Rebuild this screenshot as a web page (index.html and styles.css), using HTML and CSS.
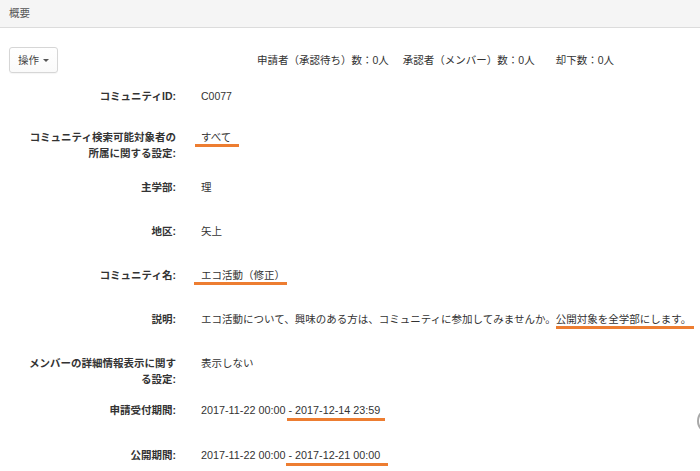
FILE: index.html
```html
<!DOCTYPE html>
<html lang="ja">
<head>
<meta charset="utf-8">
<title>概要</title>
<link rel="stylesheet" href="styles.css">
</head>
<body>
<header class="panel-heading">概要</header>
<div class="toolbar">
  <button class="btn" type="button">操作<span class="caret"></span></button>
  <div class="counts">
    <span>申請者（承認待ち）数：0人</span>
    <span class="count-2">承認者（メンバー）数：0人</span>
    <span class="count-3">却下数：0人</span>
  </div>
</div>
<dl class="details">
  <div class="field field-first"><dt>コミュニティID:</dt><dd>C0077</dd></div>
  <div class="field field-wrap"><dt>コミュニティ検索可能対象者の所属に関する設定:</dt><dd><span class="mark mark-a">すべて</span></dd></div>
  <div class="field"><dt>主学部:</dt><dd>理</dd></div>
  <div class="field"><dt>地区:</dt><dd>矢上</dd></div>
  <div class="field"><dt>コミュニティ名:</dt><dd><span class="mark mark-b">エコ活動（修正）</span></dd></div>
  <div class="field"><dt>説明:</dt><dd>エコ活動について、興味のある方は、コミュニティに参加してみませんか。<span class="mark mark-c">公開対象を全学部にします。</span></dd></div>
  <div class="field field-wrap2"><dt>メンバーの詳細情報表示に関する設定:</dt><dd>表示しない</dd></div>
  <div class="field field-date"><dt>申請受付期間:</dt><dd class="date">2017-11-22 00:00 <span class="mark mark-d">- 2017-12-14 23:59</span></dd></div>
  <div class="field field-date"><dt>公開期間:</dt><dd class="date">2017-11-22 00:00 <span class="mark mark-e">- 2017-12-21 00:00</span></dd></div>
</dl>
<div class="scroll-top"></div>
</body>
</html>
```
FILE: styles.css
```css
html, body {
  margin: 0;
  padding: 0;
  background: #fff;
}
body {
  font-family: "Liberation Sans", "Noto Sans CJK JP", sans-serif;
  font-size: 10.5px;
  line-height: 16px;
  color: #333;
  overflow: hidden;
}
.panel-heading {
  height: 27px;
  line-height: 26px;
  padding-left: 9px;
  background: #f5f5f5;
  border-bottom: 1px solid #dcdcdc;
  color: #555;
}
.toolbar {
  display: flex;
  align-items: center;
  margin-top: 19px;
  padding-left: 9px;
  height: 26px;
}
.btn {
  box-sizing: border-box;
  width: 49px;
  height: 26px;
  padding: 0 0 0 8px;
  display: flex;
  align-items: center;
  font: inherit;
  color: #444;
  background: linear-gradient(#fff, #fafafa);
  border: 1px solid #d6d6d6;
  border-radius: 3px;
  box-shadow: 0 1px 1px rgba(0, 0, 0, 0.04);
}
.caret {
  display: inline-block;
  width: 0;
  height: 0;
  margin-left: 4px;
  border-left: 3px solid transparent;
  border-right: 3px solid transparent;
  border-top: 3px solid #555;
}
.counts {
  margin-left: 199px;
  display: flex;
  white-space: nowrap;
}
.count-2 { margin-left: 14px; }
.count-3 { margin-left: 21px; }
.details {
  margin: 15px 0 0;
  padding-left: 22px;
}
.field {
  display: grid;
  grid-template-columns: 154px 1fr;
  column-gap: 25px;
  margin-bottom: 28px;
}
.field-first { margin-bottom: 25px; }
.field-wrap { margin-bottom: 18px; }
.field-wrap2 { margin-bottom: 15px; }
.field-date { margin-bottom: 29px; }
.field dt {
  text-align: right;
  font-weight: bold;
  color: #333;
}
.field dd {
  margin: 0;
  white-space: nowrap;
  color: #333;
}
.date { font-size: 10.8px; }
.mark {
  border-bottom: 3px solid #ed7d31;
  padding-bottom: 1px;
}
.mark-a { padding: 0 8px 1px 6px; margin: 0 -8px 0 -6px; }
.mark-b { padding: 0 2px 1px 7px; margin: 0 -2px 0 -7px; }
.mark-c { padding: 0 3px 1px 0; margin: 0 -3px 0 0; }
.mark-d { padding: 0 5px 2px 1px; margin: 0 -5px 0 -1px; }
.mark-e { padding: 0 8px 2px 2px; margin: 0 -8px 0 -2px; }
.scroll-top {
  position: fixed;
  left: 697px;
  top: 408px;
  width: 26px;
  height: 26px;
  box-sizing: border-box;
  border: 2px solid #a8a8a8;
  border-radius: 50%;
  background: #fff;
}
```
